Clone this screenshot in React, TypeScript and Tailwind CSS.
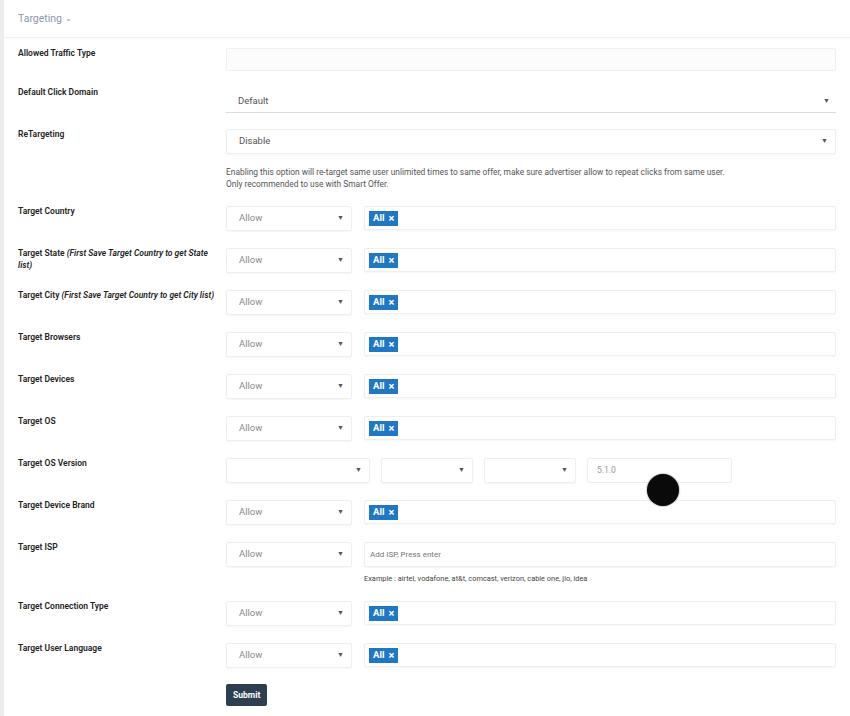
import React from 'react';

const font = { fontFamily: 'Roboto, "Open Sans", sans-serif' };

function Caret() {
  return <span className="text-[7px] text-[#555]">▼</span>;
}

function SelectBox({ value, className = '', muted = true }: { value: string; className?: string; muted?: boolean }) {
  return (
    <div
      className={`flex h-[25px] items-center justify-between rounded-[2px] border border-[#efefef] bg-white pr-[7px] pl-[12px] shadow-[0_1px_2px_rgba(0,0,0,0.04)] ${className}`}
    >
      <span className={`text-[9.5px] ${muted ? 'text-[#8a8a8a]' : 'text-[#555]'}`}>{value}</span>
      <Caret />
    </div>
  );
}

function TagBox() {
  return (
    <div className="flex h-[24px] flex-1 items-center rounded-[2px] border border-[#efefef] bg-white pl-[4px] shadow-[0_1px_2px_rgba(0,0,0,0.04)]">
      <span className="flex h-[15px] items-center gap-[4px] bg-[#1f78c1] pr-[4px] pl-[4px] text-[9.5px] font-bold text-white">
        All <span className="text-[11px] leading-none">×</span>
      </span>
    </div>
  );
}

function Row({ label, hint, children, className = '' }: { label: string; hint?: string; children: React.ReactNode; className?: string }) {
  return (
    <div className={`flex ${className}`}>
      <div className="w-[208px] shrink-0 pr-[8px] text-[8.5px] leading-[11.5px] font-semibold text-[#222]">
        {label}
        {hint && <i className="font-semibold"> {hint}</i>}
      </div>
      <div className="flex-1">{children}</div>
    </div>
  );
}

function AllowRow({ label, hint }: { label: string; hint?: string }) {
  return (
    <Row label={label} hint={hint}>
      <div className="flex gap-[12px]">
        <SelectBox value="Allow" className="w-[126px]" />
        <TagBox />
      </div>
    </Row>
  );
}

export default function App() {
  return (
    <div className="relative min-h-[716px] bg-white" style={font}>
      <div className="min-h-[716px] border-l-4 border-[#ededed]">
        <div className="flex h-[38px] items-center border-b border-[#f0f0f0] pl-[14px] text-[10.5px] text-[#8a98ab]">
          Targeting <span className="ml-[3px] text-[8px]">⌄</span>
        </div>
        <div className="flex flex-col pt-[10px] pr-[14px] pl-[14px]">
          <Row label="Allowed Traffic Type">
            <div className="h-[23px] rounded-[2px] border border-[#f0f0f0] bg-[#fcfcfc]" />
          </Row>
          <div className="mt-[16px]">
            <Row label="Default Click Domain">
              <div className="flex h-[26px] items-center justify-between border-b border-[#dcdcdc] pt-[4px] pr-[6px] pl-[12px]">
                <span className="text-[9.5px] text-[#555]">Default</span>
                <Caret />
              </div>
            </Row>
          </div>
          <div className="mt-[16px]">
            <Row label="ReTargeting">
              <SelectBox value="Disable" muted={false} />
              <p className="mt-[12px] text-[8.4px] leading-[12px] text-[#555]">
                Enabling this option will re-target same user unlimited times to same offer, make sure advertiser allow to repeat clicks from same user.
                <br />
                Only recommended to use with Smart Offer.
              </p>
            </Row>
          </div>
          <div className="mt-[16px] flex flex-col gap-[17px]">
            <AllowRow label="Target Country" />
            <AllowRow label="Target State" hint="(First Save Target Country to get State list)" />
            <AllowRow label="Target City" hint="(First Save Target Country to get City list)" />
            <AllowRow label="Target Browsers" />
            <AllowRow label="Target Devices" />
            <AllowRow label="Target OS" />
            <Row label="Target OS Version">
              <div className="flex gap-[11px]">
                <SelectBox value="" className="w-[144px]" />
                <SelectBox value="" className="w-[92px]" />
                <SelectBox value="" className="w-[92px]" />
                <div className="flex h-[25px] w-[145px] items-center rounded-[2px] border border-[#efefef] bg-white pl-[9px] text-[8.5px] text-[#9a9a9a]">
                  5.1.0
                </div>
              </div>
            </Row>
            <AllowRow label="Target Device Brand" />
            <Row label="Target ISP">
              <div className="flex gap-[12px]">
                <SelectBox value="Allow" className="w-[126px]" />
                <div className="flex-1">
                  <div className="flex h-[25px] items-center rounded-[2px] border border-[#efefef] bg-white pl-[5px] text-[8px] text-[#777] shadow-[0_1px_2px_rgba(0,0,0,0.04)]">
                    Add ISP, Press enter
                  </div>
                  <p className="mt-[6px] text-[7.4px] text-[#444]">
                    Example : airtel, vodafone, at&amp;t, comcast, verizon, cable one, jio, idea
                  </p>
                </div>
              </div>
            </Row>
            <AllowRow label="Target Connection Type" />
            <AllowRow label="Target User Language" />
            <Row label="" className="-mt-[4px]">
              <button className="h-[22px] rounded-[2px] bg-[#2c3e50] px-[7px] text-[8.5px] font-bold text-white">
                Submit
              </button>
            </Row>
          </div>
        </div>
      </div>
      <div className="absolute top-[474px] left-[647px] h-[32px] w-[32px] rounded-full bg-[#0a0a0a] shadow-[0_0_2px_rgba(0,0,0,0.6)]" />
    </div>
  );
}
